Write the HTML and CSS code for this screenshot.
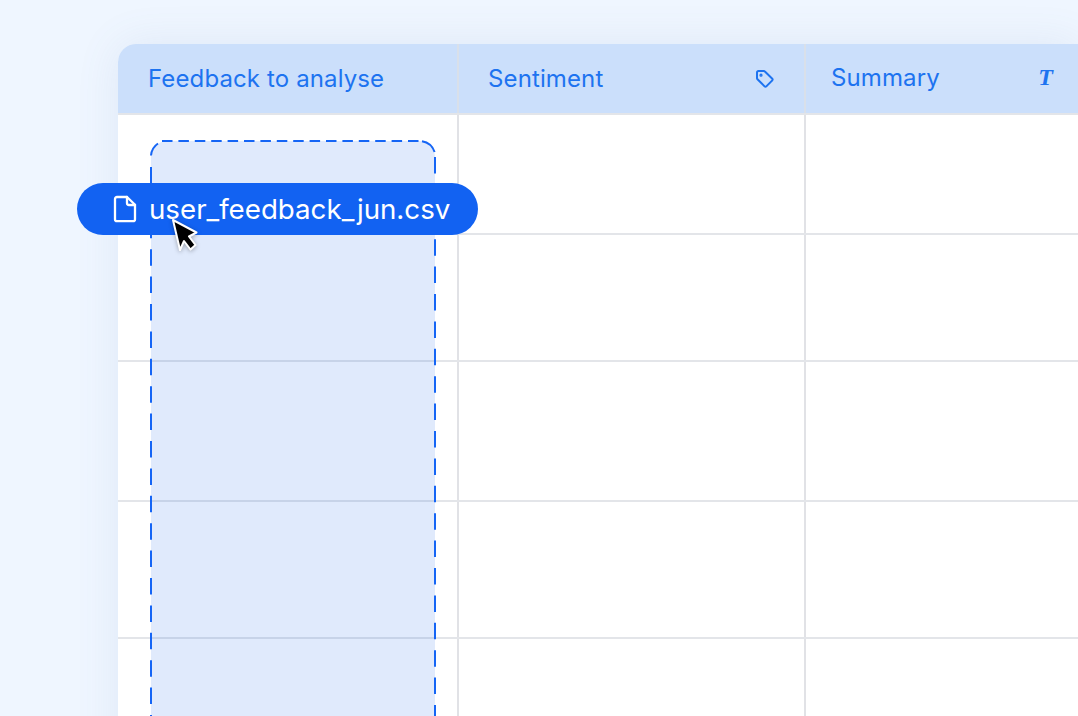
FILE: index.html
```html
<!DOCTYPE html>
<html lang="en">
<head>
<meta charset="utf-8">
<title>Feedback table</title>
<link rel="stylesheet" href="styles.css">
</head>
<body>
<main class="stage">
  <section class="sheet">
    <div class="row head">
      <div class="cell"><span class="label">Feedback to analyse</span></div>
      <div class="cell sentiment"><span class="label">Sentiment</span>
        <svg class="icon-tag" viewBox="0 0 20 20" fill="none" stroke="currentColor" stroke-width="2" stroke-linejoin="round"><path d="M2 3.4A1.4 1.4 0 0 1 3.4 2h5.4a1.6 1.6 0 0 1 1.1.5l7.4 7.2a1.2 1.2 0 0 1 0 1.7l-6 6a1.2 1.2 0 0 1-1.7 0L2.5 10.2A1.6 1.6 0 0 1 2 9.1z"/><circle cx="6" cy="6.2" r=".6" fill="currentColor"/></svg>
      </div>
      <div class="cell summary"><span class="label">Summary</span><span class="type-t">T</span></div>
    </div>
    <div class="row r1"><div class="cell"></div><div class="cell"></div><div class="cell"></div></div>
    <div class="row r2"><div class="cell"></div><div class="cell"></div><div class="cell"></div></div>
    <div class="row r3"><div class="cell"></div><div class="cell"></div><div class="cell"></div></div>
    <div class="row r4"><div class="cell"></div><div class="cell"></div><div class="cell"></div></div>
    <div class="row r5"><div class="cell"></div><div class="cell"></div><div class="cell"></div></div>
  </section>

  <svg class="dropzone" viewBox="0 0 286 640" fill="none">
    <path class="dz-fill" d="M1 640V17A16 16 0 0 1 17 1H269A16 16 0 0 1 285 17V640Z"/>
    <path class="dz-line dz-top" d="M12 1H270"/>
    <path class="dz-line" d="M1 15.5A16 16 0 0 1 8 3.5"/>
    <path class="dz-line" d="M272 1.2A16 16 0 0 1 284.6 12"/>
    <path class="dz-line dz-side" d="M1 27V640"/>
    <path class="dz-line dz-side" d="M285 17V640"/>
  </svg>

  <div class="pill">
    <svg class="icon-file" viewBox="0 0 24 28" fill="none" stroke="currentColor" stroke-width="2.3" stroke-linejoin="round" stroke-linecap="round"><path d="M4 2h10l8 7.8v14.4a2 2 0 0 1-2 2H4a2 2 0 0 1-2-2V4a2 2 0 0 1 2-2z"/><path d="M14 2v6a2 2 0 0 0 2 2h6"/></svg>
    <span>user_feedback_jun.csv</span>
  </div>

  <svg class="cursor" viewBox="0 0 30 36">
    <path d="M3 3 L26.5 15.5 L19 19.5 L25.5 28 L20.5 32.5 L14 24 L10 33 Z" fill="#000" stroke="#fff" stroke-width="2" stroke-linejoin="round"/>
  </svg>
</main>
</body>
</html>
```
FILE: styles.css
```css
* { box-sizing: border-box; }
html, body { margin: 0; height: 100%; }
body {
  overflow: hidden;
  font-family: Inter, "Noto Sans", sans-serif;
}
.stage {
  position: relative;
  width: 1078px;
  height: 716px;
  overflow: hidden;
  padding: 44px 0 0 118px;
  background: #eff6ff;
}
.sheet {
  width: 960px;
  background: #fff;
  border-radius: 18px 0 0 0;
  box-shadow: 0 0 44px rgba(90, 120, 170, 0.11);
}
.row {
  display: grid;
  grid-template-columns: 341px 347px 1fr;
  border-bottom: 2px solid #e3e5e9;
}
.cell {
  border-right: 2px solid #e1e2e6;
}
.cell:last-child { border-right: 0; }
.head {
  height: 71px;
  background: #cbdffb;
  color: #1d73f0;
  border-radius: 18px 0 0 0;
  font-size: 24px;
  font-weight: 400;
  letter-spacing: 0.12px;
}
.head .cell {
  display: flex;
  align-items: center;
  padding-left: 30px;
  border-right-color: #d9e0ea;
}
.head .sentiment { justify-content: space-between; padding-left: 29px; padding-right: 29px; }
.head .summary { justify-content: space-between; padding-left: 25px; padding-right: 25px; padding-bottom: 3px; }
.icon-tag { width: 20px; height: 20px; }
.type-t {
  font-family: "Liberation Serif", serif;
  font-style: italic;
  font-weight: 700;
  font-size: 24px;
  letter-spacing: 0;
}
.r1 { height: 120px; }
.r2 { height: 127px; }
.r3 { height: 140px; }
.r4 { height: 137px; }
.r5 { height: 120px; }

.dropzone {
  position: absolute;
  left: 150px;
  top: 140px;
  width: 286px;
  height: 640px;
}
.dz-fill { fill: rgba(16, 90, 228, 0.13); }
.dz-line { stroke: #1565f5; stroke-width: 2; }
.dz-top { stroke-dasharray: 10.5 5.9; }
.dz-side { stroke-dasharray: 16.5 10.9; }

.pill {
  position: absolute;
  left: 77px;
  top: 183px;
  width: 401px;
  height: 52px;
  display: flex;
  align-items: center;
  gap: 12px;
  padding-left: 36px;
  border-radius: 26px;
  background: #1262f2;
  color: #fff;
  font-size: 27.7px;
}
.icon-file { width: 24px; height: 28px; flex: none; }
.cursor {
  position: absolute;
  left: 170px;
  top: 217px;
  width: 30px;
  height: 36px;
  filter: drop-shadow(0 1px 2px rgba(0, 0, 0, 0.3));
}
```
